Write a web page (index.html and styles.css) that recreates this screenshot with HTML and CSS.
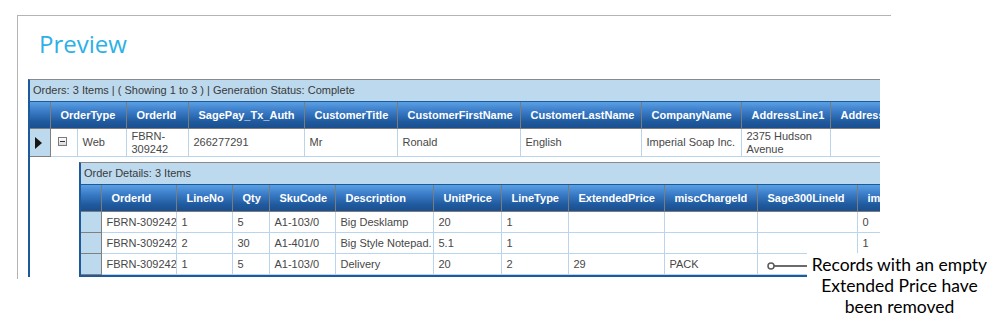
FILE: index.html
```html
<!DOCTYPE html>
<html lang="en">
<head>
  <meta charset="UTF-8" />
  <title>Preview</title>
  <link rel="stylesheet" href="styles.css">
</head>
<body>
  <div class="panel">
    <h1 class="title">Preview</h1>
    <div class="grid">
      <div class="caption">Orders: 3 Items | ( Showing 1 to 3 ) | Generation Status: Complete</div>
      <table class="master">
        <colgroup>
          <col style="width:20px"><col style="width:27px"><col style="width:49px"><col style="width:62px">
          <col style="width:116px"><col style="width:93px"><col style="width:123px"><col style="width:121px">
          <col style="width:100px"><col style="width:89px"><col style="width:100px">
        </colgroup>
        <thead>
          <tr>
            <th class="ind"></th>
            <th colspan="2">OrderType</th>
            <th>OrderId</th>
            <th>SagePay_Tx_Auth</th>
            <th>CustomerTitle</th>
            <th>CustomerFirstName</th>
            <th>CustomerLastName</th>
            <th>CompanyName</th>
            <th>AddressLine1</th>
            <th>AddressLine2</th>
          </tr>
        </thead>
        <tbody>
          <tr class="row">
            <td class="ind"><span class="arrow"></span></td>
            <td class="exp"><span class="collapse"></span></td>
            <td>Web</td>
            <td>FBRN-<br>309242</td>
            <td>266277291</td>
            <td>Mr</td>
            <td>Ronald</td>
            <td>English</td>
            <td>Imperial Soap Inc.</td>
            <td>2375 Hudson<br>Avenue</td>
            <td></td>
          </tr>
          <tr class="detail">
            <td colspan="11" class="holder">
              <div class="grid nested">
                <div class="caption">Order Details: 3 Items</div>
                <table class="child">
                  <colgroup>
                    <col style="width:20px"><col style="width:75px"><col style="width:56px"><col style="width:37px">
                    <col style="width:66px"><col style="width:98px"><col style="width:68px"><col style="width:67px">
                    <col style="width:96px"><col style="width:93px"><col style="width:100px"><col style="width:80px">
                  </colgroup>
                  <thead>
                    <tr>
                      <th class="ind"></th>
                      <th>OrderId</th>
                      <th>LineNo</th>
                      <th>Qty</th>
                      <th>SkuCode</th>
                      <th>Description</th>
                      <th>UnitPrice</th>
                      <th>LineType</th>
                      <th>ExtendedPrice</th>
                      <th>miscChargeId</th>
                      <th>Sage300LineId</th>
                      <th>importFlag</th>
                    </tr>
                  </thead>
                  <tbody>
                    <tr>
                      <td class="ind"></td>
                      <td>FBRN-309242</td><td>1</td><td>5</td><td>A1-103/0</td><td>Big Desklamp</td>
                      <td>20</td><td>1</td><td></td><td></td><td></td><td>0</td>
                    </tr>
                    <tr>
                      <td class="ind"></td>
                      <td>FBRN-309242</td><td>2</td><td>30</td><td>A1-401/0</td><td>Big Style Notepad.</td>
                      <td>5.1</td><td>1</td><td></td><td></td><td></td><td>1</td>
                    </tr>
                    <tr>
                      <td class="ind"></td>
                      <td>FBRN-309242</td><td>1</td><td>5</td><td>A1-103/0</td><td>Delivery</td>
                      <td>20</td><td>2</td><td>29</td><td>PACK</td><td></td><td></td>
                    </tr>
                  </tbody>
                </table>
              </div>
            </td>
          </tr>
        </tbody>
      </table>
    </div>
  </div>

  <div class="callout">
    <svg class="leader" width="42" height="26" viewBox="0 0 42 26">
      <line x1="9" y1="13" x2="42" y2="13" stroke="#3a3a3a" stroke-width="1.5" />
      <circle cx="6" cy="13" r="3" fill="#fff" stroke="#5a5a5a" stroke-width="1.5" />
    </svg>
    <div class="note">Records with an empty<br>Extended Price have<br>been removed</div>
  </div>
</body>
</html>
```

FILE: styles.css
```css
body {
  margin: 0;
  background: #fff;
  font-family: "Liberation Sans", Arial, sans-serif;
}
.panel {
  margin: 15px 0 0 17px;
  width: 873px;
  height: 263px;
  border-top: 1px solid #b4b4b4;
  border-left: 1px solid #b4b4b4;
  overflow: hidden;
}
.title {
  margin: 12px 0 19px 21px;
  font-family: "Open Sans", sans-serif;
  font-size: 24px;
  font-weight: 400;
  line-height: 32px;
  color: #2cb1e6;
}
.grid {
  margin-left: 10px;
  width: 850px;
  border-top: 1px solid #8a8a8a;
  border-left: 2px solid #1d5a9c;
  overflow: hidden;
}
.caption {
  height: 21px;
  line-height: 21px;
  padding-left: 3px;
  background: #bcd9ee;
  color: #3a3a3a;
  font-size: 11px;
  white-space: nowrap;
  border-bottom: 1px solid #1d5a9c;
}
table {
  border-collapse: collapse;
  table-layout: fixed;
}
.master {
  width: 900px;
}
.child {
  width: 856px;
}
th {
  height: 26px;
  padding: 0 0 0 10px;
  text-align: left;
  font-size: 11px;
  font-weight: bold;
  color: #fff;
  white-space: nowrap;
  overflow: hidden;
  background: linear-gradient(to bottom, #5a9fe3 0%, #3b7cc8 35%, #205a9e 75%, #1a4f8f 100%);
  border-right: 1px solid #7c7c7c;
  border-bottom: 1px solid #7c7c7c;
}
th.ind {
  padding: 0;
}
td {
  padding: 0 5px;
  font-size: 11px;
  line-height: 13px;
  color: #474747;
  white-space: nowrap;
  overflow: hidden;
  border-right: 1px solid #b9d5ed;
  border-bottom: 1px solid #b9d5ed;
}
.row td {
  height: 27px;
}
td.ind {
  padding: 0;
  background: #bcd9ee;
  border-right: 1px solid #808080;
  border-bottom: 1px solid #808080;
  text-align: center;
}
.arrow {
  display: inline-block;
  margin-right: 3px;
  vertical-align: middle;
  border-left: 7px solid #151515;
  border-top: 6px solid transparent;
  border-bottom: 6px solid transparent;
}
td.exp {
  padding: 0 0 0 7px;
}
.collapse {
  display: inline-block;
  position: relative;
  top: -2px;
  width: 7px;
  height: 7px;
  vertical-align: middle;
  border: 1px solid #7a7a7a;
  background: linear-gradient(to bottom, #fff, #dadada);
}
.collapse::after {
  content: "";
  position: absolute;
  left: 1px;
  top: 3px;
  width: 5px;
  height: 1px;
  background: #333;
}
td.holder {
  padding: 5px 0 0 49px;
  border: none;
  overflow: visible;
}
.nested {
  margin-left: 0;
  width: auto;
  display: inline-block;
  vertical-align: top;
  border-bottom: 2px solid #1d5a9c;
}
.nested .caption {
  width: 853px;
}
.child td {
  height: 20px;
  line-height: 20px;
}
.callout {
  position: absolute;
  left: 765px;
  top: 253px;
  display: flex;
  align-items: flex-start;
}
.leader {
  display: block;
}
.note {
  width: 185px;
  padding-top: 1px;
  background: #fff;
  font-family: Lato, sans-serif;
  font-size: 17.5px;
  font-weight: 400;
  line-height: 21px;
  color: #000;
  text-align: center;
}
```
